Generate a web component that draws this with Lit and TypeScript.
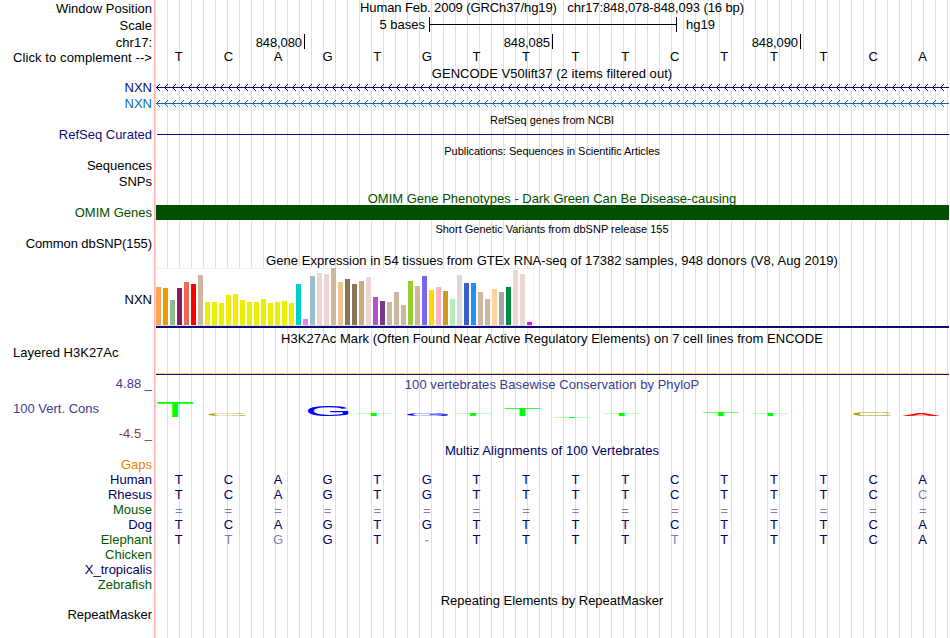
import { LitElement, html, svg, css } from 'lit';
import { customElement, property } from 'lit/decorators.js';
import { classMap } from 'lit/directives/class-map.js';

// text, distance to the next label, colour class, left aligned
type Label = [string, number, string?, boolean?];

const LABELS: Label[] = [
  ['Window Position', 17],
  ['Scale', 17],
  ['chr17:', 15],
  ['Click to complement -->', 30, 'wide'],
  ['NXN', 16, 'navy'],
  ['NXN', 31, 'blue'],
  ['RefSeq Curated', 31, 'navy'],
  ['Sequences', 16],
  ['SNPs', 31],
  ['OMIM Genes', 31, 'omim'],
  ['Common dbSNP(155)', 56, 'tight'],
  ['NXN', 53],
  ['Layered H3K27Ac', 31, '', true],
  ['4.88 _', 25, 'cons'],
  ['100 Vert. Cons', 25, 'cons', true],
  ['-4.5 _', 31, 'neg'],
  ['Gaps', 15, 'gaps'],
  ['Human', 15, 'species'],
  ['Rhesus', 15, 'species'],
  ['Mouse', 15, 'green'],
  ['Dog', 15, 'species'],
  ['Elephant', 15, 'green'],
  ['Chicken', 15, 'green'],
  ['X_tropicalis', 15, 'species'],
  ['Zebrafish', 30, 'green'],
  ['RepeatMasker', 15],
];

// height and colour for each tissue
const TISSUES: [number, string][] = [
  [38, '#ffa54f'], [37, '#ee9a00'], [25, '#8fbc8f'], [37, '#8b1c62'], [43, '#ee6a50'], [41, '#ff0000'],
  [50, '#cdb79e'], [23, '#eeee00'], [23, '#eeee00'], [22, '#eeee00'], [30, '#eeee00'], [31, '#eeee00'],
  [25, '#eeee00'], [23, '#eeee00'], [23, '#eeee00'], [26, '#eeee00'], [22, '#eeee00'], [23, '#eeee00'],
  [24, '#eeee00'], [22, '#eeee00'], [41, '#00cdcd'], [6, '#ee82ee'], [49, '#9ac0cd'], [52, '#eed5d2'],
  [51, '#eed5d2'], [57, '#cdb79e'], [43, '#eec591'], [46, '#8b7355'], [41, '#8b7355'], [44, '#cdaa7d'],
  [48, '#eed5d2'], [28, '#b452cd'], [24, '#7a378b'], [23, '#cdb79e'], [33, '#cdb79e'], [20, '#cdb79e'],
  [44, '#9acd32'], [39, '#cdb79e'], [49, '#7a67ee'], [35, '#ffd700'], [38, '#ffb6c1'], [34, '#cd9b1d'],
  [26, '#b4eeb4'], [50, '#d9d9d9'], [42, '#3a5fcd'], [42, '#1e90ff'], [33, '#cdb79e'], [26, '#cdb79e'],
  [36, '#ffd39b'], [33, '#a6a6a6'], [38, '#008b45'], [55, '#eed5d2'], [51, '#eed5d2'], [3, '#ff00ff'],
];

// letter, column, top, bottom
const LOGO: [string, number, number, number][] = [
  ['T', 0, 10, 25],
  ['C', 1, 22, 24],
  ['G', 3, 13, 24],
  ['T', 4, 22, 24],
  ['G', 5, 22, 24],
  ['T', 6, 22, 24],
  ['T', 7, 16, 24],
  ['T', 8, 25, 26],
  ['T', 9, 22, 24],
  ['T', 11, 20, 24],
  ['T', 12, 22, 24],
  ['C', 14, 20, 24],
  ['A', 15, 21, 24],
];

// ink box of each base at font-size 100, drawn width, left offset and colour
const GLYPHS: Record<string, { x0: number; x1: number; y0: number; y1: number; width: number; dx: number; fill: string }> = {
  T: { x0: 2.1, x1: 59, y0: -68.8, y1: 0, width: 36, dx: 2.2, fill: '#00ff00' },
  C: { x0: 5, x1: 68.3, y0: -69.8, y1: 1, width: 38.5, dx: 4, fill: '#aaa000' },
  G: { x0: 5, x1: 71.5, y0: -69.8, y1: 1, width: 41, dx: 4, fill: '#0000ff' },
  A: { x0: 0.2, x1: 66.5, y0: -68.8, y1: 0, width: 38, dx: 3, fill: '#ff0000' },
};

const STEP = 49.6;

@customElement('strand-arrows')
export class StrandArrows extends LitElement {
  @property() color = '#0c0c78';

  static styles = css`
    :host {
      display: block;
      height: 16px;
    }

    svg {
      display: block;
    }
  `;

  render() {
    const tips = Array.from({ length: 99 }, (_, i) => 1.5 + i * 8);
    return html`
      <svg width="794" height="16" viewBox="0 0 794 16" stroke=${this.color} fill="none">
        <path d="M1 6.5H794" shape-rendering="crispEdges"></path>
        <path d=${tips.map(x => `M${x + 3.5} 3L${x} 6.5L${x + 3.5} 10`).join('')}></path>
      </svg>
    `;
  }
}

@customElement('base-row')
export class BaseRow extends LitElement {
  @property() bases = '';
  @property() human = '';

  static styles = css`
    :host {
      display: grid;
      grid-template-columns: repeat(16, 49.6px);
      margin-left: -1px;
      text-align: center;
    }

    .faint {
      opacity: 0.5;
    }

    .gap {
      padding-top: 1px;
    }
  `;

  render() {
    return [...this.bases].map((base, i) => html`
      <span class=${classMap({ faint: !!this.human && base !== this.human[i], gap: base === '=' })}>${base}</span>
    `);
  }
}

@customElement('expression-chart')
export class ExpressionChart extends LitElement {
  static styles = css`
    :host {
      display: block;
      padding-left: 1px;
    }

    .bars {
      display: flex;
      align-items: flex-end;
      gap: 2px;
      box-sizing: border-box;
      width: 378px;
      height: 58px;
      background: #fff;
      border: solid #f0f0f0;
      border-width: 1px 1px 1px 0;
      border-bottom-color: #dcdcdc;
    }

    .bar {
      flex: none;
      width: 5px;
    }

    .model {
      height: 2px;
      background: #0c0c78;
    }
  `;

  render() {
    return html`
      <div class="bars">
        ${TISSUES.map(([height, color]) => html`
          <div class="bar" style="height:${height}px;background:${color}"></div>
        `)}
      </div>
      <div class="model"></div>
    `;
  }
}

@customElement('conservation-logo')
export class ConservationLogo extends LitElement {
  static styles = css`
    :host {
      display: block;
      height: 51px;
    }

    svg {
      display: block;
      font: 100px 'Liberation Sans', Arial, sans-serif;
    }
  `;

  renderLetter([letter, column, top, bottom]: [string, number, number, number]) {
    const g = GLYPHS[letter];
    const sx = g.width / (g.x1 - g.x0);
    const sy = (bottom - top) / (g.y1 - g.y0);
    const x = column * STEP + g.dx - g.x0 * sx;
    const y = bottom - g.y1 * sy;
    return svg`<text transform="matrix(${sx} 0 0 ${sy} ${x} ${y})" fill=${g.fill}>${letter}</text>`;
  }

  render() {
    return html`
      <svg width="794" height="51" viewBox="0 0 794 51">
        ${LOGO.map(item => this.renderLetter(item))}
      </svg>
    `;
  }
}

@customElement('app-root')
export class AppRoot extends LitElement {
  static styles = css`
    :host {
      display: flex;
      box-sizing: border-box;
      width: 950px;
      height: 638px;
      overflow: hidden;
      background: #fff;
      color: #000;
      font: 13px/15px 'Liberation Sans', Arial, sans-serif;
      white-space: nowrap;
    }

    .labels {
      flex: none;
      box-sizing: border-box;
      width: 155px;
      padding: 1px 2px 0 13px;
      border-right: 1px solid #ffb4b4;
      text-align: right;
    }

    .left {
      text-align: left;
    }

    .wide {
      letter-spacing: 0.09px;
    }

    .loose {
      letter-spacing: 0.05px;
    }

    .tight {
      letter-spacing: -0.09px;
    }

    .snug {
      letter-spacing: -0.05px;
    }

    .tracks {
      flex: none;
      width: 794px;
      background: linear-gradient(to right, transparent 11px, #dcdcf8 11px) 1px 0 / 12px 100%;
    }

    .title {
      text-align: center;
    }

    .small {
      font-size: 11px;
    }

    .navy { color: #0c0c78; }
    .blue { color: #0c6cb0; }
    .omim { color: #005000; }
    .cons { color: #3c3c8c; }
    .neg { color: #8c3c3c; }
    .gaps { color: #e68200; }
    .species { color: #000064; }
    .green { color: #005a00; }

    .h15 { height: 15px; }
    .h17 { height: 17px; }
    .h29 { height: 29px; }
    .h31 { height: 31px; }
    .h42 { height: 42px; }
    .h47 { height: 47px; }
    .h61 { height: 61px; }

    .scale {
      display: flex;
      height: 17px;
    }

    .scale-text {
      width: 270px;
      text-align: right;
    }

    .ruler {
      display: flex;
      align-items: center;
      box-sizing: border-box;
      width: 248px;
      height: 15px;
      margin: 0 9px 0 4px;
      border: solid #000;
      border-width: 0 1px;
    }

    .ruler-line {
      flex: 1;
      height: 1px;
      background: #000;
    }

    .ticks {
      display: flex;
      height: 15px;
    }

    .tick {
      box-sizing: border-box;
      width: 248px;
      padding: 1px 2px 0 0;
      border-right: 1px solid #000;
      letter-spacing: -0.1px;
      text-align: right;
    }

    .tick:first-child {
      width: 150px;
    }

    .refseq {
      height: 1px;
      margin: 6px 0 9px 2px;
      background: #0c0c78;
    }

    .omim-title {
      height: 14px;
    }

    .omim-bar {
      height: 15px;
      margin: 0 0 2px 1px;
      background: #005000;
    }

    .chart {
      height: 63px;
    }

    .signal {
      height: 1px;
      margin: 0 0 2px 1px;
      border-top: 1px solid #ffc882;
      background: #1e1450;
    }
  `;

  renderLabel([text, height, color = '', left = false]: Label) {
    return html`<div class=${classMap({ label: true, left, ...(color ? { [color]: true } : {}) })} style="height:${height}px">${text}</div>`;
  }

  render() {
    const human = 'TCAGTGTTTTCTTTCA';
    return html`
      <div class="labels">${LABELS.map(label => this.renderLabel(label))}</div>
      <div class="tracks">
        <div class="title tight h17">Human Feb. 2009 (GRCh37/hg19)&nbsp;&nbsp; chr17:848,078-848,093 (16 bp)</div>
        <div class="scale">
          <div class="scale-text">5 bases</div>
          <div class="ruler"><div class="ruler-line"></div></div>
          <div>hg19</div>
        </div>
        <div class="ticks">
          <div class="tick">848,080</div>
          <div class="tick">848,085</div>
          <div class="tick">848,090</div>
        </div>
        <base-row class="h17" bases=${human}></base-row>
        <div class="title loose h15">GENCODE V50lift37 (2 items filtered out)</div>
        <strand-arrows></strand-arrows>
        <strand-arrows color="#0c6cb0"></strand-arrows>
        <div class="title small h15">RefSeq genes from NCBI</div>
        <div class="refseq"></div>
        <div class="title small snug h47">Publications: Sequences in Scientific Articles</div>
        <div class="title omim omim-title">OMIM Gene Phenotypes - Dark Green Can Be Disease-causing</div>
        <div class="omim-bar"></div>
        <div class="title small h31">Short Genetic Variants from dbSNP release 155</div>
        <div class="title loose h15">Gene Expression in 54 tissues from GTEx RNA-seq of 17382 samples, 948 donors (V8, Aug 2019)</div>
        <expression-chart class="chart"></expression-chart>
        <div class="title loose h42">H3K27Ac Mark (Often Found Near Active Regulatory Elements) on 7 cell lines from ENCODE</div>
        <div class="signal"></div>
        <div class="title loose cons h15">100 vertebrates Basewise Conservation by PhyloP</div>
        <conservation-logo></conservation-logo>
        <div class="title wide species h29">Multiz Alignments of 100 Vertebrates</div>
        <base-row class="species h15" bases=${human}></base-row>
        <base-row class="species h15" bases="TCAGTGTTTTCTTTCC" human=${human}></base-row>
        <base-row class="species h15" bases="================" human=${human}></base-row>
        <base-row class="species h15" bases=${human}></base-row>
        <base-row class="species h61" bases="TTGGT-TTTTTTTTCA" human=${human}></base-row>
        <div class="title">Repeating Elements by RepeatMasker</div>
      </div>
    `;
  }
}
